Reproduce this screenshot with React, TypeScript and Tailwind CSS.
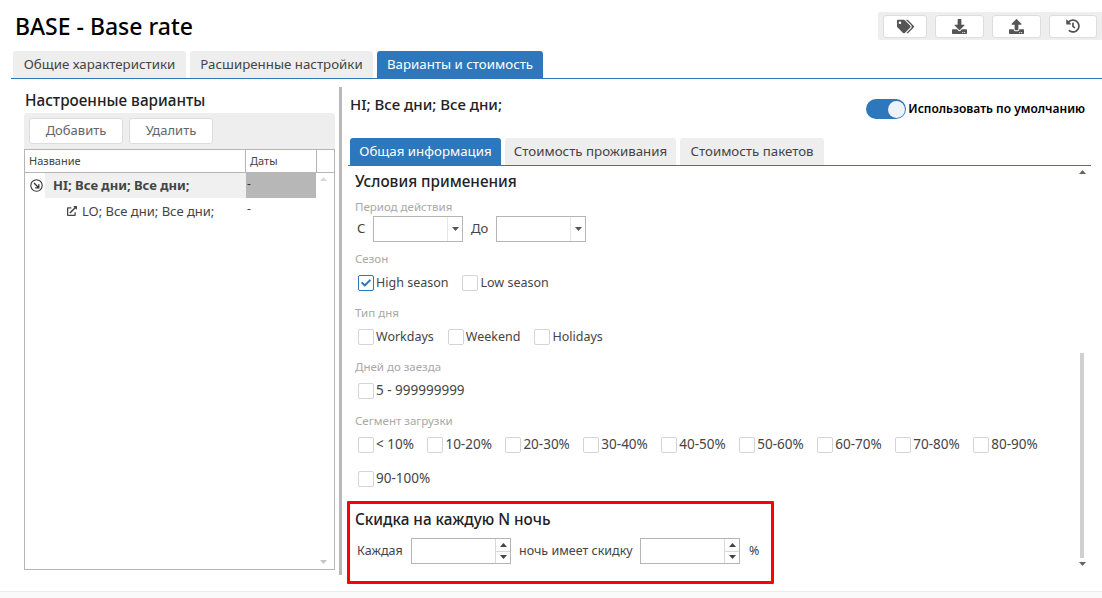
import { FaTags, FaDownload, FaUpload, FaHistory, FaExternalLinkAlt, FaCheck } from "react-icons/fa";

const font = { fontFamily: '"Noto Sans", sans-serif' };

function Tab({ label, active, className }: { label: string; active?: boolean; className: string }) {
  return (
    <div
      className={`flex h-[27px] items-center justify-center rounded-t-[3px] text-[13.3px] ${className} ${
        active ? "bg-[#2d77bc] text-white" : "bg-[#eeeeee] text-[#444444]"
      }`}
    >
      {label}
    </div>
  );
}

function Check({ label, checked, textClass = "text-[12.5px]" }: { label: string; checked?: boolean; textClass?: string }) {
  return (
    <div className={`flex h-[18px] items-center leading-none text-[#444444] ${textClass}`}>
      <span
        className={`mr-[2px] flex h-[16px] w-[16px] shrink-0 items-center justify-center rounded-[2px] border ${
          checked ? "border-[#2d77bc] text-[#2d77bc]" : "border-[#d4d4d4]"
        }`}
      >
        {checked && <FaCheck size={10} />}
      </span>
      {label}
    </div>
  );
}

function Caret({ up, className = "" }: { up?: boolean; className?: string }) {
  return (
    <svg width="7" height="4" viewBox="0 0 7 4" className={className}>
      <path d={up ? "M3.5 0 7 4H0z" : "M0 0h7L3.5 4z"} fill="currentColor" />
    </svg>
  );
}

function DateInput() {
  return (
    <div className="flex h-[26px] w-[90px] border border-[#b5b5b5]">
      <div className="flex-1" />
      <div className="flex w-[15px] items-center justify-center border-l border-[#e6e6e6] text-[#555555]">
        <Caret />
      </div>
    </div>
  );
}

function Spinner() {
  return (
    <div className="flex h-[26px] w-[100px] border border-[#b5b5b5]">
      <div className="flex-1" />
      <div className="flex w-[15px] flex-col border-l border-[#d8d8d8] text-[#444444]">
        <div className="flex flex-1 items-center justify-center border-b border-[#d8d8d8]">
          <Caret up />
        </div>
        <div className="flex flex-1 items-center justify-center">
          <Caret />
        </div>
      </div>
    </div>
  );
}

function ToolButton({ width, children }: { width: string; children: React.ReactNode }) {
  return (
    <div className={`flex h-[23px] items-center justify-center rounded-[3px] border border-[#dddddd] bg-white text-[#555555] ${width}`}>
      {children}
    </div>
  );
}

function FieldLabel({ children, className = "" }: { children: React.ReactNode; className?: string }) {
  return <div className={`text-[11.5px] leading-[16px] text-[#a8a8a8] ${className}`}>{children}</div>;
}

const segments = ["< 10%", "10-20%", "20-30%", "30-40%", "40-50%", "50-60%", "60-70%", "70-80%", "80-90%"];

export default function App() {
  return (
    <div className="flex h-[598px] w-[1102px] flex-col overflow-hidden bg-white" style={font}>
      <header className="flex h-[51px] items-start justify-between">
        <h1 className="ml-[15px] mt-[9px] text-[23px] font-medium leading-[34px] text-black">BASE - Base rate</h1>
        <div className="mt-[12px] flex h-[28px] w-[224px] items-center gap-[8px] rounded-l-[2px] bg-[#eeeeee] pl-[5px]">
          <ToolButton width="w-[44px]"><FaTags size={17} /></ToolButton>
          <ToolButton width="w-[49px]"><FaDownload size={15} /></ToolButton>
          <ToolButton width="w-[49px]"><FaUpload size={15} /></ToolButton>
          <ToolButton width="w-[48px]"><FaHistory size={14} /></ToolButton>
        </div>
      </header>

      <nav className="ml-[11px] flex gap-[4px] border-b border-[#2d77bc] pl-[2px]">
        <Tab label="Общие характеристики" className="w-[173px]" />
        <Tab label="Расширенные настройки" className="w-[183px]" />
        <Tab label="Варианты и стоимость" active className="w-[166px]" />
      </nav>

      <main className="flex h-[512px] flex-none">
        <section className="ml-[24px] mt-[10px] flex h-[481px] w-[311px] flex-col">
          <h2 className="pl-[1px] text-[15.3px] font-medium leading-[22px] text-[#222222]">Настроенные варианты</h2>
          <div className="mt-[2px] flex h-[36px] flex-none items-center gap-[6px] rounded-t-[3px] bg-[#eeeeee] pl-[5px] text-[13px] text-[#666666]">
            <div className="flex h-[26px] w-[94px] items-center justify-center rounded-[3px] border border-[#dddddd] bg-white">Добавить</div>
            <div className="flex h-[26px] w-[84px] items-center justify-center rounded-[3px] border border-[#dddddd] bg-white">Удалить</div>
          </div>
          <div className="relative flex flex-1 flex-col border border-[#b5b5b5]">
            <div className="flex h-[23px] border-b border-[#b5b5b5] text-[11px] leading-[22px] text-[#444444]">
              <div className="w-[220px] pl-[4px]">Название</div>
              <div className="w-[71px] border-l border-[#b5b5b5] pl-[4px]">Даты</div>
              <div className="flex-1 border-l border-[#b5b5b5]" />
            </div>
            <div className="flex h-[25px]">
              <div className="flex w-[20px] items-center pl-[5px]">
                <svg width="13" height="13" viewBox="0 0 13 13" fill="none" stroke="#333333">
                  <circle cx="6.5" cy="6.5" r="5.7" strokeWidth="1.1" />
                  <path d="M4 4l4.5 4.5M8.8 5.2v3.6H5.2" strokeWidth="1.3" />
                </svg>
              </div>
              <div className="flex w-[201px] items-center bg-[#f0f0f0] pl-[8px] pt-[1px] text-[13px] font-bold text-[#444444]">HI; Все дни; Все дни;</div>
              <div className="w-[70px] bg-[#b7b7b7] pl-[1px] text-[12px] leading-[22px] text-[#333333]">-</div>
            </div>
            <div className="flex h-[26px]">
              <div className="flex w-[221px] items-center pl-[42px] pt-[1px] text-[13px] text-[#444444]">
                <FaExternalLinkAlt size={10} className="mb-[2px] mr-[5px]" />
                LO; Все дни; Все дни;
              </div>
              <div className="pl-[1px] text-[12px] leading-[22px] text-[#444444]">-</div>
            </div>
            <Caret up className="absolute right-[7px] top-[27px] text-[#d8d8d8]" />
            <Caret className="absolute bottom-[5px] right-[7px] text-[#c4c4c4]" />
          </div>
        </section>

        <div className="ml-[4px] mt-[8px] h-[488px] w-[3px] bg-[#b9b9b9]" />

        <section className="relative ml-[8px] flex-1">
          <div className="flex h-[59px]">
            <div className="pt-[14px] text-[15px] font-medium leading-[22px] text-[#222222]">HI; Все дни; Все дни;</div>
            <div className="ml-auto mr-[17px] mt-[20px] flex h-[20px] items-center">
              <div className="flex h-[20px] w-[40px] items-center justify-end rounded-full bg-[#2d77bc] pr-[1px]">
                <div className="h-[17px] w-[17px] rounded-full bg-[#eef3fa]" />
              </div>
              <span className="ml-[2px] text-[12px] font-semibold text-black">Использовать по умолчанию</span>
            </div>
          </div>

          <div className="-ml-[2px] flex w-[743px] gap-[4px] border-b border-[#2d77bc] pl-[2px]">
            <Tab label="Общая информация" active className="w-[151px]" />
            <Tab label="Стоимость проживания" className="w-[171px]" />
            <Tab label="Стоимость пакетов" className="w-[144px]" />
          </div>

          <div className="pl-[5px]">
            <h3 className="mt-[4px] text-[15.3px] font-medium leading-[22px] text-[#222222]">Условия применения</h3>
            <FieldLabel className="mt-[7px]">Период действия</FieldLabel>
            <div className="mt-[1px] flex items-center text-[13px] text-[#444444]">
              <span className="ml-[2px] w-[16px]">С</span>
              <DateInput />
              <span className="ml-[8px] w-[25px]">До</span>
              <DateInput />
            </div>
            <FieldLabel className="mt-[9px]">Сезон</FieldLabel>
            <div className="mt-[7px] flex gap-[14px] pl-[3px]">
              <Check label="High season" checked />
              <Check label="Low season" />
            </div>
            <FieldLabel className="mt-[13px]">Тип дня</FieldLabel>
            <div className="mt-[7px] flex gap-[14px] pl-[3px]">
              <Check label="Workdays" />
              <Check label="Weekend" />
              <Check label="Holidays" />
            </div>
            <FieldLabel className="mt-[13px]">Дней до заезда</FieldLabel>
            <div className="mt-[7px] pl-[3px]">
              <Check label="5 - 999999999" textClass="text-[13.5px]" />
            </div>
            <FieldLabel className="mt-[13px]">Сегмент загрузки</FieldLabel>
            <div className="mt-[7px] flex gap-[13.5px] pl-[3px]">
              {segments.map((segment) => (
                <Check key={segment} label={segment} textClass="text-[13.5px]" />
              ))}
            </div>
            <div className="mt-[16px] pl-[3px]">
              <Check label="90-100%" textClass="text-[13.5px]" />
            </div>
          </div>

          <div className="-ml-[3px] mt-[13px] h-[83px] w-[427px] rounded-[1px] border-[3px] border-[#ff0000] pl-[5px]">
            <h3 className="mt-[4px] text-[15.3px] font-medium leading-[22px] text-[#222222]">Скидка на каждую N ночь</h3>
            <div className="mt-[8px] flex items-center text-[12.5px] text-[#444444]">
              <span className="ml-[2px] w-[54px]">Каждая</span>
              <Spinner />
              <span className="ml-[8px] w-[121px]">ночь имеет скидку</span>
              <Spinner />
              <span className="ml-[9px]">%</span>
            </div>
          </div>

          <Caret up className="absolute left-[729px] top-[91px] text-[#666666]" />
          <div className="absolute left-[730px] top-[274px] h-[205px] w-[4px] bg-[#d0d0d0]" />
          <Caret className="absolute left-[729px] top-[483px] text-[#666666]" />
        </section>
      </main>

      <footer className="flex-1 border-t border-[#eeeeee] bg-[#fafafa]" />
    </div>
  );
}
